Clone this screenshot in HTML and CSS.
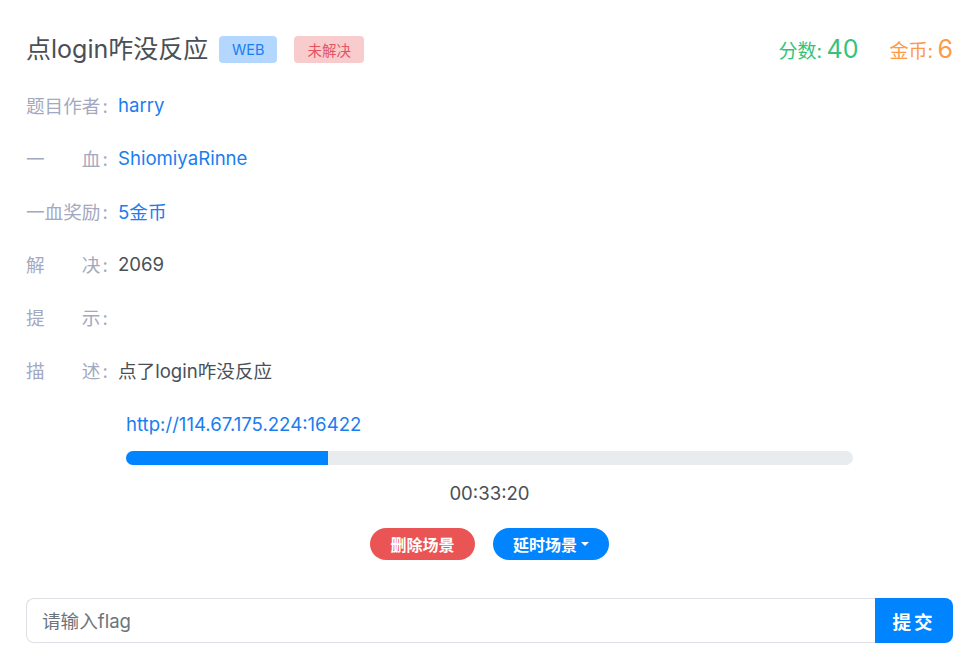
FILE: index.html
```html
<!DOCTYPE html>
<html lang="zh">
<head>
<meta charset="utf-8">
<link rel="stylesheet" href="styles.css">
</head>
<body>
<div class="page">
  <div class="header">
    <div class="title-wrap">
      <h1 class="title">点login咋没反应</h1>
      <span class="badge badge-web">WEB</span>
      <span class="badge badge-unsolved">未解决</span>
    </div>
    <div class="stats">
      <span class="score"><span class="stat-label">分数:</span> <span class="stat-num">40</span></span>
      <span class="coin"><span class="stat-label">金币:</span> <span class="stat-num">6</span></span>
    </div>
  </div>
  <div class="info">
    <div class="row"><span class="label"><span class="lt">题目作者</span><span class="colon">:</span></span><a class="val link">harry</a></div>
    <div class="row"><span class="label"><span class="lt">一血</span><span class="colon">:</span></span><a class="val link">ShiomiyaRinne</a></div>
    <div class="row"><span class="label"><span class="lt">一血奖励</span><span class="colon">:</span></span><span class="val link">5金币</span></div>
    <div class="row"><span class="label"><span class="lt">解决</span><span class="colon">:</span></span><span class="val">2069</span></div>
    <div class="row"><span class="label"><span class="lt">提示</span><span class="colon">:</span></span><span class="val"></span></div>
    <div class="row"><span class="label"><span class="lt">描述</span><span class="colon">:</span></span><span class="val">点了login咋没反应</span></div>
  </div>
  <div class="scene">
    <a class="url">http://114.67.175.224:16422</a>
    <div class="bar"><div class="fill" style="width:27.8%"></div></div>
    <div class="time">00:33:20</div>
    <div class="actions">
      <button class="btn btn-red">删除场景</button>
      <button class="btn btn-blue">延时场景<span class="caret"></span></button>
    </div>
  </div>
  <div class="flag">
    <input class="flag-input" type="text" placeholder="请输入flag">
    <button class="submit">提交</button>
  </div>
</div>
</body>
</html>
```
FILE: styles.css
```css
* { box-sizing: border-box; }
body {
  margin: 0;
  background: #fff;
  font-family: Inter, "Noto Sans CJK SC", sans-serif;
  color: #495057;
}
.page {
  padding: 30px 23px 0 26px;
}
.header {
  display: flex;
  justify-content: space-between;
  align-items: center;
  height: 38px;
}
.title-wrap {
  display: flex;
  align-items: center;
}
.title {
  margin: 0;
  font-size: 25px;
  font-weight: 400;
  color: #495057;
  line-height: 38px;
}
.badge {
  display: inline-flex;
  align-items: center;
  justify-content: center;
  height: 27px;
  border-radius: 4px;
  font-size: 14.5px;
  padding: 0;
}
.badge-web {
  margin-left: 11px;
  background: #b3d7ff;
  color: #1a7ef0;
  width: 58px;
}
.badge-unsolved {
  margin-left: 17px;
  background: #f8cbcd;
  color: #e4555f;
  width: 70px;
}
.stats {
  display: flex;
  gap: 31px;
  align-items: baseline;
}
.stat-label { font-size: 19px; }
.stat-num { font-size: 25px; }
.score { color: #35c37a; }
.coin { color: #fd9a48; }
.info {
  margin-top: 10px;
}
.row {
  display: flex;
  align-items: center;
  height: 53px;
  font-size: 18.6px;
}
.label {
  display: flex;
  align-items: baseline;
  flex-shrink: 0;
  width: 92px;
  color: #a3a9c0;
  white-space: nowrap;
}
.lt {
  display: block;
  flex-shrink: 0;
  width: 4em;
  text-align: justify;
  text-align-last: justify;
  margin-right: 2px;
}
.colon { font-family: Inter, sans-serif; }
.val { color: #495057; }
.link { color: #1a7ef0; text-decoration: none; }
.scene {
  margin-left: 100px;
  width: 727px;
  display: flex;
  flex-direction: column;
  padding-top: 17px;
}
.url {
  font-size: 18.6px;
  color: #1a7ef0;
  line-height: 22px;
}
.bar {
  margin-top: 16px;
  height: 14px;
  background: #e9ecef;
  border-radius: 7px;
  overflow: hidden;
}
.fill {
  height: 100%;
  background: #0084ff;
}
.time {
  margin-top: 17px;
  text-align: center;
  font-size: 18.6px;
  line-height: 22px;
  color: #495057;
}
.actions {
  display: flex;
  justify-content: center;
  gap: 18px;
  margin-top: 24px;
}
.btn {
  height: 32px;
  border: none;
  border-radius: 16px;
  color: #fff;
  font-family: "Noto Sans CJK SC", sans-serif;
  font-weight: 700;
  font-size: 16px;
  display: inline-flex;
  align-items: center;
  justify-content: center;
  padding: 0;
}
.btn-red { background: #ea5455; width: 105px; }
.btn-blue { background: #0084ff; width: 116px; }
.caret {
  display: inline-block;
  margin-left: 4px;
  border-left: 4px solid transparent;
  border-right: 4px solid transparent;
  border-top: 4px solid #fff;
}
.flag {
  display: flex;
  margin-top: 38px;
  height: 45px;
}
.flag-input {
  flex: 1;
  border: 1px solid #dcdfe3;
  border-right: none;
  border-radius: 8px 0 0 8px;
  padding: 0 15px;
  font-size: 18.6px;
  font-family: Inter, "Noto Sans CJK SC", sans-serif;
  color: #495057;
  outline: none;
}
.flag-input::placeholder { color: #6c757d; }
.submit {
  width: 78px;
  border: none;
  background: #0084ff;
  color: #fff;
  border-radius: 0 8px 8px 0;
  font-family: "Noto Sans CJK SC", sans-serif;
  font-weight: 700;
  font-size: 18.6px;
  letter-spacing: 3px;
  padding-left: 6px;
}
```
